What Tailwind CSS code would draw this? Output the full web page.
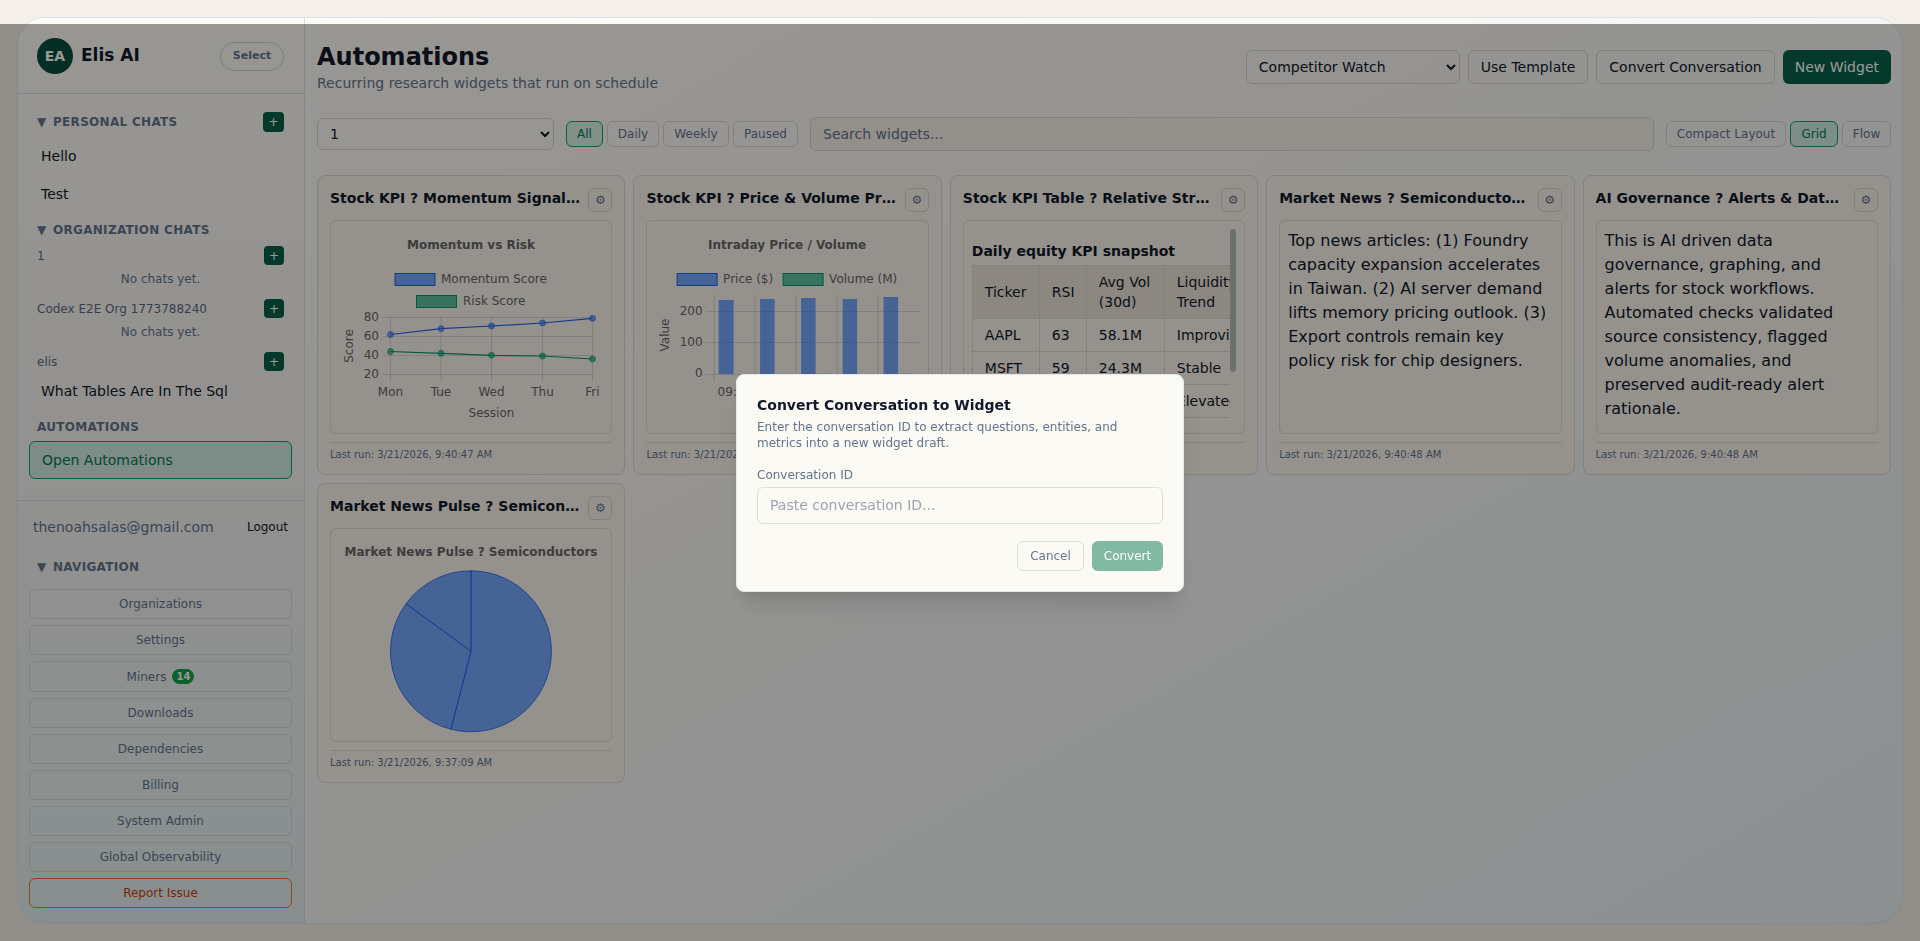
<!doctype html>
<html lang="en">
<head>
<meta charset="utf-8">
<title>Automations</title>
<script src="https://cdn.jsdelivr.net/npm/@tailwindcss/browser@4"></script>
</head>
<body class="relative h-[941px] overflow-hidden bg-[#f4efe8] font-['DejaVu_Sans',sans-serif] text-[#111827]">
<div class="h-[941px] p-[17px]">
  <div class="flex h-[907px] overflow-hidden rounded-[28px] border border-[#dbe3ee] bg-[linear-gradient(150deg,#fffdf8_0%,#f9f7f4_40%,#e9f1f2_100%)]">
    <aside class="flex w-[287px] shrink-0 flex-col border-r border-[#d5dde8] bg-[linear-gradient(180deg,#fdfbf6_0%,#f7f4f0_40%,#e3eeef_100%)]">
      <div class="flex h-[76px] shrink-0 items-center justify-between border-b border-[#d5dde8] pt-px pr-5 pl-[19px]">
        <div class="flex items-center gap-2">
          <div class="flex h-9 w-9 items-center justify-center rounded-full bg-[#064e3b] text-sm font-bold text-white">EA</div>
          <div class="text-[17px] font-bold">Elis AI</div>
        </div>
        <button class="h-[29px] w-16 rounded-full border border-[#cbd2da] text-[11px] font-bold text-[#64748b]">Select</button>
      </div>
      <div class="h-[407px] shrink-0 border-b border-[#d5dde8] pr-5 pl-[19px]">
        <div class="mt-[18px] flex h-5 items-center justify-between">
          <span class="flex text-xs font-bold tracking-[0.3px] text-[#64748b] uppercase"><span class="w-4">▼</span>Personal Chats</span>
          <button class="flex h-5 w-[21px] items-center justify-center rounded-[4px] bg-[#065f46] text-xs text-white">+</button>
        </div>
        <div class="mt-[5px] flex h-[38px] items-center pl-1 text-sm">Hello</div>
        <div class="flex h-[38px] items-center pl-1 text-sm">Test</div>
        <div class="mt-[7px] flex h-5 items-center text-xs font-bold tracking-[0.3px] text-[#64748b] uppercase"><span class="w-4">▼</span>Organization Chats</div>
        <div class="mt-[6px] flex h-[19px] items-center justify-between text-xs text-[#5b6a80]">
          <span>1</span>
          <button class="flex h-[19px] w-5 items-center justify-center rounded-[4px] bg-[#065f46] text-xs text-white">+</button>
        </div>
        <div class="mt-[6px] h-4 text-center text-xs leading-4 text-[#64748b]">No chats yet.</div>
        <div class="mt-[12px] flex h-[19px] items-center justify-between text-xs text-[#5b6a80]">
          <span>Codex E2E Org 1773788240</span>
          <button class="flex h-[19px] w-5 items-center justify-center rounded-[4px] bg-[#065f46] text-xs text-white">+</button>
        </div>
        <div class="mt-[6px] h-4 text-center text-xs leading-4 text-[#64748b]">No chats yet.</div>
        <div class="mt-[12px] flex h-[19px] items-center justify-between text-xs text-[#5b6a80]">
          <span>elis</span>
          <button class="flex h-[19px] w-5 items-center justify-center rounded-[4px] bg-[#065f46] text-xs text-white">+</button>
        </div>
        <div class="mt-px flex h-[38px] items-center pl-1 text-sm">What Tables Are In The Sql</div>
        <div class="mt-[7px] flex h-5 items-center text-xs font-bold tracking-[0.3px] text-[#64748b] uppercase">Automations</div>
        <button class="mt-[4px] -ml-2 flex h-[38px] w-[263px] items-center rounded-md border border-[#10a26f] bg-[#10b981]/15 px-3 text-sm text-[#047857]">Open Automations</button>
      </div>
      <div class="flex-1 px-3">
        <div class="mt-[16px] flex h-5 items-center justify-between pr-1 pl-[3px]">
          <span class="text-sm text-[#64748b]">thenoahsalas@gmail.com</span>
          <span class="text-xs">Logout</span>
        </div>
        <div class="mt-[20px] flex h-5 items-center pl-[7px] text-xs font-bold tracking-[0.3px] text-[#64748b] uppercase"><span class="w-4">▼</span>Navigation</div>
        <div class="mt-[12px] ml-[-1px] flex w-[263px] flex-col gap-[6px] text-xs text-[#64748b]">
          <button class="h-[30px] rounded-md border border-[#d6d8d8]">Organizations</button>
          <button class="h-[30px] rounded-md border border-[#d6d8d8]">Settings</button>
          <button class="flex h-[31px] items-center justify-center gap-1.5 rounded-md border border-[#d6d8d8]">Miners <span class="flex h-[15px] w-[22px] items-center justify-center rounded-full bg-[#16a34a] text-[10px] font-bold text-white">14</span></button>
          <button class="h-[30px] rounded-md border border-[#d6d8d8]">Downloads</button>
          <button class="h-[30px] rounded-md border border-[#d6d8d8]">Dependencies</button>
          <button class="h-[30px] rounded-md border border-[#d6d8d8]">Billing</button>
          <button class="h-[30px] rounded-md border border-[#d6d8d8]">System Admin</button>
          <button class="h-[30px] rounded-md border border-[#d6d8d8]">Global Observability</button>
          <button class="h-[30px] rounded-md border border-[#ea7a2e] text-[#c2410c]">Report Issue</button>
        </div>
      </div>
    </aside>

    <main class="min-w-0 flex-1 pt-[23px] pr-[11px] pl-3">
      <header class="flex items-center justify-between">
        <div>
          <h1 class="text-2xl font-bold">Automations</h1>
          <p class="text-sm text-[#64748b]">Recurring research widgets that run on schedule</p>
        </div>
        <div class="flex items-center gap-2">
          <select class="h-[34px] w-[214px] rounded-md border border-[#d9d6cc] bg-transparent px-2 text-sm"><option>Competitor Watch</option></select>
          <button class="h-[34px] rounded-md border border-[#d9d6cc] px-3 text-sm">Use Template</button>
          <button class="h-[34px] rounded-md border border-[#d9d6cc] px-3 text-sm">Convert Conversation</button>
          <button class="h-[34px] rounded-md bg-[#065f46] px-3 text-sm text-white">New Widget</button>
        </div>
      </header>

      <div class="mt-6 flex items-center">
        <select class="h-8 w-[237px] rounded-md border border-[#d9d6cc] bg-transparent px-2 text-sm"><option>1</option></select>
        <div class="ml-3 flex gap-1 text-xs text-[#64748b]">
          <button class="h-[26px] w-[37px] rounded-md border border-[#10a26f] bg-[#10b981]/15 text-[#047857]">All</button>
          <button class="h-[26px] w-[52px] rounded-md border border-[#d9d6cc]">Daily</button>
          <button class="h-[26px] w-[66px] rounded-md border border-[#d9d6cc]">Weekly</button>
          <button class="h-[26px] w-[65px] rounded-md border border-[#d9d6cc]">Paused</button>
        </div>
        <input class="ml-3 h-[34px] min-w-0 flex-1 rounded-md border border-[#d9d6cc] bg-[#f6eee6] px-3 text-sm placeholder:text-[#64748b]" placeholder="Search widgets...">
        <div class="ml-3 flex gap-1 text-xs text-[#64748b]">
          <button class="h-[26px] w-[120px] rounded-md border border-[#d9d6cc]">Compact Layout</button>
          <button class="h-[26px] w-12 rounded-md border border-[#10a26f] bg-[#10b981]/15 text-[#047857]">Grid</button>
          <button class="h-[26px] w-[49px] rounded-md border border-[#d9d6cc]">Flow</button>
        </div>
      </div>

      <div class="mt-6 grid grid-cols-5 gap-2">
        <!-- Card 1 -->
        <article class="flex h-[300px] min-w-0 flex-col rounded-lg border border-[#dcd9cf] bg-[#f8f3ec] p-3">
          <div class="flex h-6 items-start justify-between gap-2">
            <h3 class="truncate text-sm font-bold">Stock KPI ? Momentum Signal Monitor</h3>
            <button class="flex h-6 w-6 shrink-0 items-center justify-center rounded-md border border-[#d9d6cc] text-xs text-[#64748b]">⚙</button>
          </div>
          <div class="mt-2 h-[214px] overflow-hidden rounded-md border border-[#dcd9cf]">
            <svg class="block" width="282" height="212" viewBox="331 221 282 212" font-size="12" fill="#666">
              <text x="471" y="249" text-anchor="middle" font-weight="bold">Momentum vs Risk</text>
              <rect x="395" y="273.5" width="40" height="12" fill="#2274ff" fill-opacity=".62" stroke="#2563eb"/>
              <text x="441" y="282.5">Momentum Score</text>
              <rect x="416.5" y="295.5" width="40" height="12" fill="#00a070" fill-opacity=".62" stroke="#059669"/>
              <text x="463" y="304.5">Risk Score</text>
              <g stroke="#000" stroke-opacity=".12" fill="none">
                <path d="M383 317.5H592.5M383 336.5H592.5M383 355.5H592.5M383 374.5H592.5"/>
                <path d="M390.5 317V382M441 317V382M491.5 317V382M542.5 317V382M592.5 317V382"/>
              </g>
              <g text-anchor="end">
                <text x="379" y="321">80</text><text x="379" y="339.5">60</text><text x="379" y="358.5">40</text><text x="379" y="377.5">20</text>
              </g>
              <g text-anchor="middle">
                <text x="390.5" y="396">Mon</text><text x="441" y="396">Tue</text><text x="491.5" y="396">Wed</text><text x="542.5" y="396">Thu</text><text x="592.5" y="396">Fri</text>
                <text x="491.5" y="417">Session</text>
                <text transform="translate(353 346) rotate(-90)">Score</text>
              </g>
              <path d="M390.5 334.5 441 328.7 491.5 326 542.5 323 592.5 318.3" fill="none" stroke="#2563eb" stroke-width="1.2"/>
              <path d="M390.5 351.5 441 353.3 491.5 355.3 542.5 356 592.5 359" fill="none" stroke="#059669" stroke-width="1.2"/>
              <g fill="#2274ff" fill-opacity=".62" stroke="#2563eb" stroke-opacity=".6">
                <circle cx="390.5" cy="334.5" r="3"/><circle cx="441" cy="328.7" r="3"/><circle cx="491.5" cy="326" r="3"/><circle cx="542.5" cy="323" r="3"/><circle cx="592.5" cy="318.3" r="3"/>
              </g>
              <g fill="#00a070" fill-opacity=".62" stroke="#059669" stroke-opacity=".6">
                <circle cx="390.5" cy="351.5" r="3"/><circle cx="441" cy="353.3" r="3"/><circle cx="491.5" cy="355.3" r="3"/><circle cx="542.5" cy="356" r="3"/><circle cx="592.5" cy="359" r="3"/>
              </g>
            </svg>
          </div>
          <div class="mt-2 border-t border-[#dcd9cf] pt-[6px] text-[10px] leading-3 text-[#64748b]">Last run: 3/21/2026, 9:40:47 AM</div>
        </article>

        <!-- Card 2 -->
        <article class="flex h-[300px] min-w-0 flex-col rounded-lg border border-[#dcd9cf] bg-[#f8f3ec] p-3">
          <div class="flex h-6 items-start justify-between gap-2">
            <h3 class="truncate text-sm font-bold">Stock KPI ? Price &amp; Volume Pressure</h3>
            <button class="flex h-6 w-6 shrink-0 items-center justify-center rounded-md border border-[#d9d6cc] text-xs text-[#64748b]">⚙</button>
          </div>
          <div class="mt-2 h-[214px] overflow-hidden rounded-md border border-[#dcd9cf]">
            <svg class="block" width="282" height="212" viewBox="647.4 221 282 212" font-size="12" fill="#666">
              <text x="787.5" y="249" text-anchor="middle" font-weight="bold">Intraday Price / Volume</text>
              <rect x="677.5" y="273.5" width="40" height="12" fill="#2274ff" fill-opacity=".62" stroke="#2563eb"/>
              <text x="723.5" y="282.5">Price ($)</text>
              <rect x="783.5" y="273.5" width="40" height="12" fill="#00a070" fill-opacity=".62" stroke="#059669"/>
              <text x="829.5" y="282.5">Volume (M)</text>
              <g stroke="#000" stroke-opacity=".12" fill="none">
                <path d="M706 311.5H920M706 342.5H920M706 374.5H920"/>
                <path d="M714.5 295V381M755.5 295V374M796.5 295V374M837.5 295V374M878.5 295V374"/>
              </g>
              <g fill="#2274ff" fill-opacity=".62">
                <rect x="719" y="300" width="15" height="74"/><rect x="760.5" y="299" width="14.5" height="75"/><rect x="801.5" y="298" width="14.5" height="76"/><rect x="843" y="299" width="14.5" height="75"/><rect x="884" y="297" width="14.5" height="77"/>
              </g>
              <g fill="#00a070" fill-opacity=".35">
                <rect x="818" y="373.5" width="14.5" height="1"/><rect x="900" y="373.5" width="14.5" height="1"/>
              </g>
              <g text-anchor="end">
                <text x="703" y="315">200</text><text x="703" y="346">100</text><text x="703" y="377">0</text>
              </g>
              <text x="718" y="396">09:30</text>
              <text transform="translate(669 335) rotate(-90)" text-anchor="middle">Value</text>
            </svg>
          </div>
          <div class="mt-2 border-t border-[#dcd9cf] pt-[6px] text-[10px] leading-3 text-[#64748b]">Last run: 3/21/2026, 9:40:47 AM</div>
        </article>

        <!-- Card 3 -->
        <article class="flex h-[300px] min-w-0 flex-col rounded-lg border border-[#dcd9cf] bg-[#f8f3ec] p-3">
          <div class="flex h-6 items-start justify-between gap-2">
            <h3 class="truncate text-sm font-bold">Stock KPI Table ? Relative Strength</h3>
            <button class="flex h-6 w-6 shrink-0 items-center justify-center rounded-md border border-[#d9d6cc] text-xs text-[#64748b]">⚙</button>
          </div>
          <div class="relative mt-2 h-[214px] overflow-hidden rounded-md border border-[#dcd9cf]">
            <div class="mr-[14px] ml-2 h-full overflow-hidden pt-5">
              <div class="text-sm leading-5 font-bold">Daily equity KPI snapshot</div>
              <table class="mt-1 w-[340px] table-fixed border-collapse text-sm leading-5">
                <colgroup><col class="w-[67px]"><col class="w-[47px]"><col class="w-[78px]"><col class="w-[148px]"></colgroup>
                <tr class="bg-[#ebe1d8]"><td class="border border-[#dcd9cf] px-3 py-1.5">Ticker</td><td class="border border-[#dcd9cf] px-3 py-1.5">RSI</td><td class="border border-[#dcd9cf] px-3 py-1.5">Avg Vol (30d)</td><td class="border border-[#dcd9cf] px-3 py-1.5">Liquidity<br>Trend</td></tr>
                <tr><td class="border border-[#dcd9cf] px-3 py-1.5">AAPL</td><td class="border border-[#dcd9cf] px-3 py-1.5">63</td><td class="border border-[#dcd9cf] px-3 py-1.5">58.1M</td><td class="border border-[#dcd9cf] px-3 py-1.5">Improving</td></tr>
                <tr><td class="border border-[#dcd9cf] px-3 py-1.5">MSFT</td><td class="border border-[#dcd9cf] px-3 py-1.5">59</td><td class="border border-[#dcd9cf] px-3 py-1.5">24.3M</td><td class="border border-[#dcd9cf] px-3 py-1.5">Stable</td></tr>
                <tr><td class="border border-[#dcd9cf] px-3 py-1.5">NVDA</td><td class="border border-[#dcd9cf] px-3 py-1.5">71</td><td class="border border-[#dcd9cf] px-3 py-1.5">41.7M</td><td class="border border-[#dcd9cf] px-3 py-1.5">Elevated</td></tr>
              </table>
            </div>
            <div class="absolute top-2 right-2 h-[143px] w-[6px] rounded-full bg-[#b5bdb9]"></div>
          </div>
          <div class="mt-2 border-t border-[#dcd9cf] pt-[6px] text-[10px] leading-3 text-[#64748b]">Last run: 3/21/2026, 9:40:48 AM</div>
        </article>

        <!-- Card 4 -->
        <article class="flex h-[300px] min-w-0 flex-col rounded-lg border border-[#dcd9cf] bg-[#f8f3ec] p-3">
          <div class="flex h-6 items-start justify-between gap-2">
            <h3 class="truncate text-sm font-bold">Market News ? Semiconductor Supply</h3>
            <button class="flex h-6 w-6 shrink-0 items-center justify-center rounded-md border border-[#d9d6cc] text-xs text-[#64748b]">⚙</button>
          </div>
          <div class="mt-2 h-[214px] overflow-hidden rounded-md border border-[#dcd9cf] px-2 py-2 text-base leading-6">Top news articles: (1) Foundry capacity expansion accelerates in Taiwan. (2) AI server demand lifts memory pricing outlook. (3) Export controls remain key policy risk for chip designers.</div>
          <div class="mt-2 border-t border-[#dcd9cf] pt-[6px] text-[10px] leading-3 text-[#64748b]">Last run: 3/21/2026, 9:40:48 AM</div>
        </article>

        <!-- Card 5 -->
        <article class="flex h-[300px] min-w-0 flex-col rounded-lg border border-[#dcd9cf] bg-[#f8f3ec] p-3">
          <div class="flex h-6 items-start justify-between gap-2">
            <h3 class="truncate text-sm font-bold">AI Governance ? Alerts &amp; Data Checks</h3>
            <button class="flex h-6 w-6 shrink-0 items-center justify-center rounded-md border border-[#d9d6cc] text-xs text-[#64748b]">⚙</button>
          </div>
          <div class="mt-2 h-[214px] overflow-hidden rounded-md border border-[#dcd9cf] px-2 py-2 text-base leading-6">This is AI driven data governance, graphing, and alerts for stock workflows. Automated checks validated source consistency, flagged volume anomalies, and preserved audit-ready alert rationale.</div>
          <div class="mt-2 border-t border-[#dcd9cf] pt-[6px] text-[10px] leading-3 text-[#64748b]">Last run: 3/21/2026, 9:40:48 AM</div>
        </article>

        <!-- Card 6 -->
        <article class="flex h-[300px] min-w-0 flex-col rounded-lg border border-[#dcd9cf] bg-[#f8f3ec] p-3">
          <div class="flex h-6 items-start justify-between gap-2">
            <h3 class="truncate text-sm font-bold">Market News Pulse ? Semiconductors</h3>
            <button class="flex h-6 w-6 shrink-0 items-center justify-center rounded-md border border-[#d9d6cc] text-xs text-[#64748b]">⚙</button>
          </div>
          <div class="mt-2 h-[214px] overflow-hidden rounded-md border border-[#dcd9cf]">
            <svg class="block" width="282" height="212" viewBox="331 530 282 212" font-size="12" fill="#666">
              <text x="471" y="557" text-anchor="middle" font-weight="bold">Market News Pulse ? Semiconductors</text>
              <g fill="#2274ff" fill-opacity=".62" stroke="#2563eb" stroke-opacity=".8">
                <path d="M471 652.3V571.8A80.5 80.5 0 1 1 451 730.3Z"/>
                <path d="M471 652.3 451 730.3A80.5 80.5 0 0 1 406 604.7Z"/>
                <path d="M471 652.3 406 604.7A80.5 80.5 0 0 1 471 571.8Z"/>
              </g>
            </svg>
          </div>
          <div class="mt-2 border-t border-[#dcd9cf] pt-[6px] text-[10px] leading-3 text-[#64748b]">Last run: 3/21/2026, 9:37:09 AM</div>
        </article>
      </div>
    </main>
  </div>
</div>

<!-- Modal overlay -->
<div class="fixed inset-x-0 top-6 bottom-0 flex items-center justify-center bg-black/40">
  <div class="w-[448px] rounded-lg border border-[#e5e7eb] bg-[#fbfaf5] p-5 shadow-xl">
    <h2 class="text-sm font-bold text-[#0f172a]">Convert Conversation to Widget</h2>
    <p class="mt-1 text-xs text-[#64748b]">Enter the conversation ID to extract questions, entities, and metrics into a new widget draft.</p>
    <label class="mt-4 block text-xs text-[#64748b]">Conversation ID</label>
    <input class="mt-1 h-[37px] w-full rounded-md border border-[#dfdfda] bg-transparent px-3 text-sm placeholder:text-[#9ca3af]" placeholder="Paste conversation ID...">
    <div class="mt-[17px] flex justify-end gap-2">
      <button class="h-[30px] w-[67px] rounded-md border border-[#dfdfda] text-xs text-[#64748b]">Cancel</button>
      <button class="h-[30px] w-[71px] rounded-md bg-[#82b9a3] text-xs text-white">Convert</button>
    </div>
  </div>
</div>
</body>
</html>
